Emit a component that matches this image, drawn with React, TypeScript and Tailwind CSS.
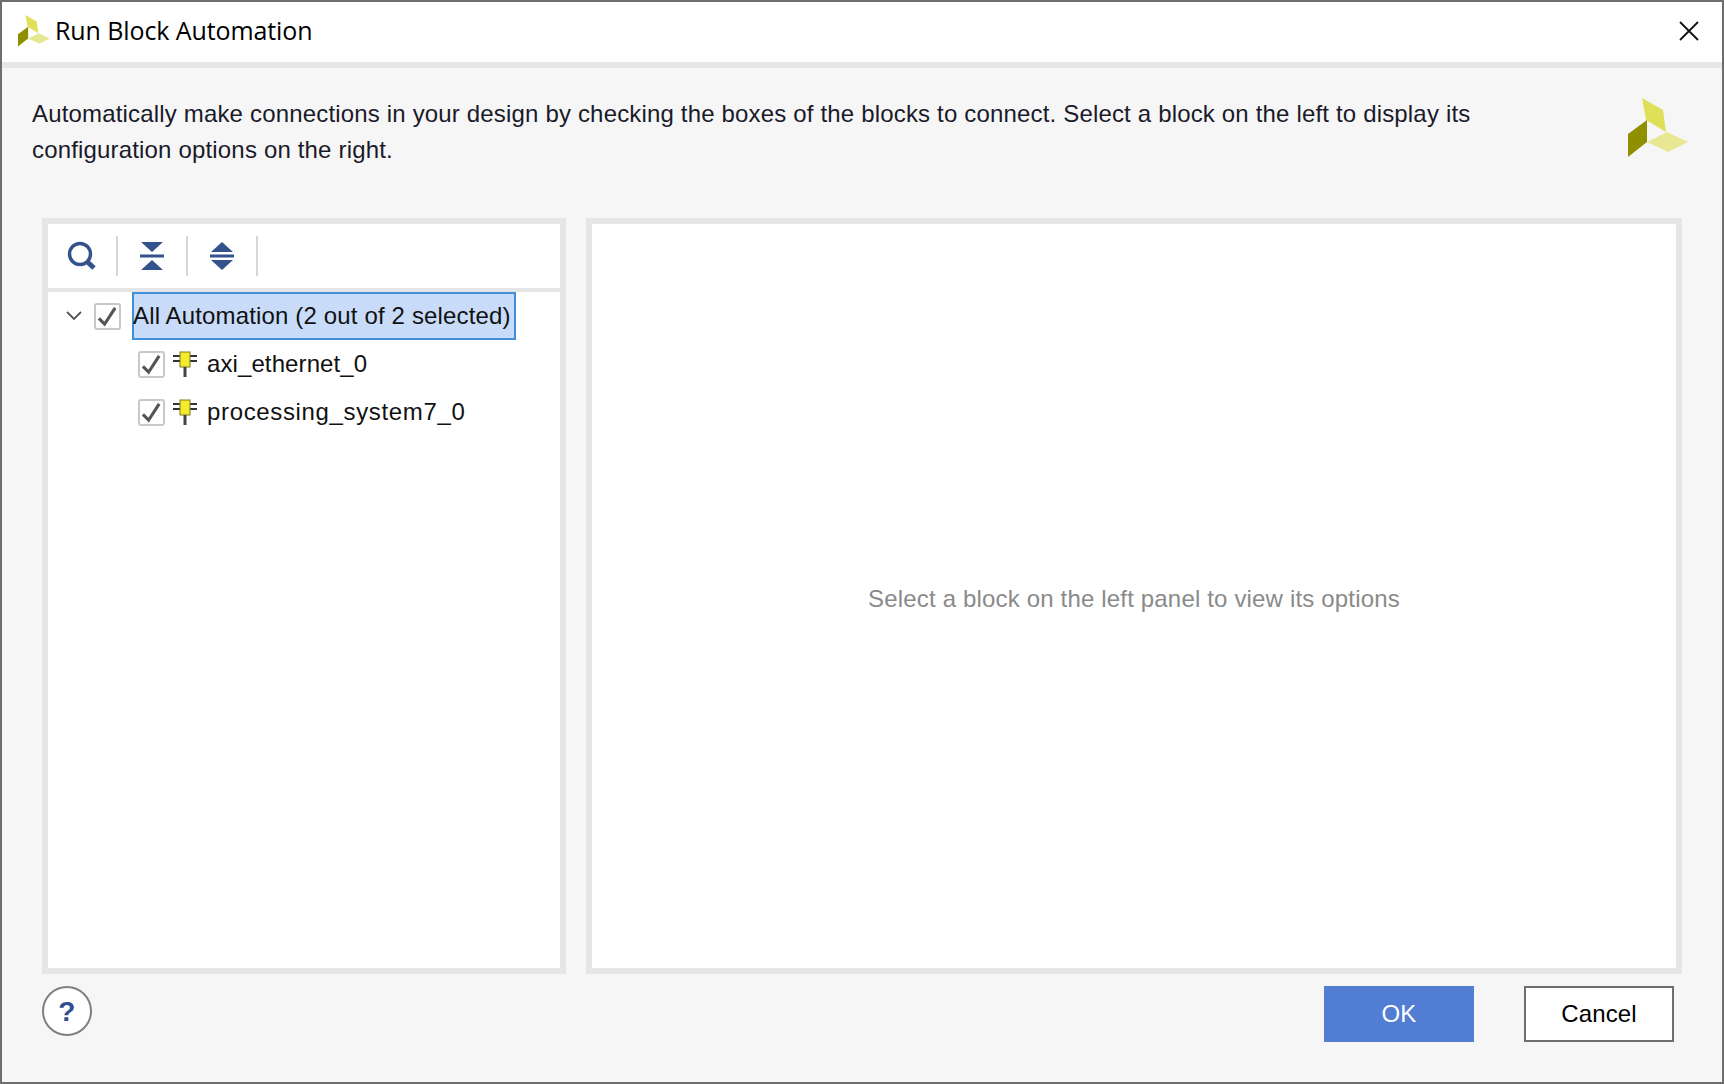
import React from 'react';

const XilinxLogo: React.FC<{ className?: string }> = ({ className }) => (
  <svg viewBox="0 0 60 60" className={className}>
    <polygon points="14,0 35,12 38,34 18,22" fill="#e0df5a" />
    <polygon points="19,22 19,44 0,59 0,36" fill="#8f8f00" />
    <polygon points="39,34 60,44 40,54 19,44" fill="#e8e894" />
  </svg>
);

const CheckBox = () => (
  <span className="w-[27px] h-[27px] shrink-0 flex items-center justify-center bg-white border-2 border-[#c8c8c8] rounded-[3px]">
    <svg viewBox="0 0 24 24" className="w-[23px] h-[23px]" fill="none" stroke="#555555" strokeWidth={3.2}>
      <path d="M3 14l6 6L20 3" />
    </svg>
  </span>
);

const PinIcon = () => (
  <svg viewBox="0 0 24 26" className="w-[24px] h-[26px] shrink-0">
    <path d="M0 5h7M0 10h7M17 5h7M17 10h7" stroke="#333333" strokeWidth={2} />
    <rect x="7" y="1" width="10" height="15" fill="#f4e92a" stroke="#7a7a20" />
    <rect x="10.5" y="16" width="3" height="10" fill="#444444" />
  </svg>
);

const ToolSep = () => <span className="w-[2px] h-10 bg-[#d8d8d8]" />;

const TreeRow: React.FC<{ label: string; className?: string }> = ({ label, className }) => (
  <div className="h-12 flex items-center pl-[90px]">
    <CheckBox />
    <span className="ml-2">
      <PinIcon />
    </span>
    <span className={`ml-[10px] text-[#111111] ${className ?? ''}`}>{label}</span>
  </div>
);

export default function App() {
  return (
    <div className="w-[1724px] h-[1084px] flex flex-col border-2 border-[#6e6e6e] bg-[#f6f6f6] font-['Liberation_Sans',Arial,sans-serif] text-[24px] tracking-[0.17px] overflow-hidden">
      {/* Title bar */}
      <div className="h-[60px] shrink-0 bg-white flex items-center pl-4 pr-4 pb-[2px]">
        <XilinxLogo className="w-[32px] h-[32px]" />
        <span className="ml-[5px] text-[25px] tracking-[-0.1px] text-black font-['Open_Sans',sans-serif]">Run Block Automation</span>
        <svg viewBox="0 0 20 20" className="w-5 h-5 ml-auto mr-[7px]" fill="none" stroke="#111111" strokeWidth={1.8}>
          <path d="M1 1l18 18M19 1L1 19" />
        </svg>
      </div>
      <div className="h-[6px] shrink-0 bg-[#e6e6e6]" />

      {/* Description */}
      <div className="h-[150px] shrink-0 flex justify-between pl-[30px] pr-[34px] pt-[28px]">
        <p className="w-[1490px] leading-9 text-[#1a1a2a]">
          Automatically make connections in your design by checking the boxes of the blocks to connect. Select a block on the left to display its configuration options on the right.
        </p>
        <XilinxLogo className="w-[60px] h-[60px] mt-[2px]" />
      </div>

      {/* Panels */}
      <div className="h-[756px] shrink-0 flex gap-5 pl-10 pr-10">
        <div className="w-[524px] border-[6px] border-[#e6e6e6] bg-white flex flex-col">
          <div className="h-[68px] shrink-0 flex items-center border-b-4 border-[#e6e6e6]">
            <span className="w-[68px] flex justify-center">
              <svg viewBox="0 0 30 30" className="w-[30px] h-[30px]" fill="none" stroke="#34528c">
                <circle cx="13" cy="13" r="10.5" strokeWidth={3.4} />
                <path d="M20.5 21l6.5 6" strokeWidth={5} />
              </svg>
            </span>
            <ToolSep />
            <span className="w-[68px] flex justify-center">
              <svg viewBox="0 0 24 28" className="w-[24px] h-[28px]" fill="#34528c">
                <path d="M1 0h22L12 10zM0 12.5h24v3H0zM12 18l11 10H1z" />
              </svg>
            </span>
            <ToolSep />
            <span className="w-[68px] flex justify-center">
              <svg viewBox="0 0 24 28" className="w-[24px] h-[28px]" fill="#34528c">
                <path d="M12 0l11 10H1zM0 12.5h24v3H0zM1 18h22L12 28z" />
              </svg>
            </span>
            <ToolSep />
          </div>
          <div className="flex-1">
            <div className="h-12 flex items-center">
              <svg viewBox="0 0 16 10" className="w-4 h-[10px] ml-[18px]" fill="none" stroke="#555555" strokeWidth={1.8}>
                <path d="M1 1l7 7 7-7" />
              </svg>
              <span className="ml-[12px]">
                <CheckBox />
              </span>
              <span className="ml-[11px] h-12 w-[384px] flex items-center bg-[#c8dcfa] border-2 border-[#3d8fd6] text-[#111111] whitespace-nowrap tracking-[0.15px] -indent-[1px]">
                All Automation (2 out of 2 selected)
              </span>
            </div>
            <TreeRow label="axi_ethernet_0" className="tracking-[0.1px]" />
            <TreeRow label="processing_system7_0" className="tracking-[0.65px]" />
          </div>
        </div>
        <div className="flex-1 border-[6px] border-[#e6e6e6] bg-white flex items-center justify-center pt-[6px] text-[#8a8a8a]">
          Select a block on the left panel to view its options
        </div>
      </div>

      {/* Footer */}
      <div className="flex-1 flex items-start pl-10 pr-[48px] pt-3">
        <span className="w-[50px] h-[50px] rounded-full bg-white border-2 border-[#808080] flex items-center justify-center pt-[2px] text-[28px] font-bold text-[#2f4f8f]">
          ?
        </span>
        <button className="ml-auto w-[150px] h-14 bg-[#517dd3] text-white">OK</button>
        <button className="ml-[50px] w-[150px] h-14 bg-white border-2 border-[#6e6e6e] text-black">Cancel</button>
      </div>
    </div>
  );
}
